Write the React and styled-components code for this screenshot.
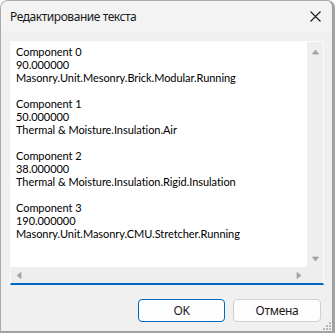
import React from 'react';
import styled, { createGlobalStyle } from 'styled-components';

const GlobalStyle = createGlobalStyle`
  html, body {
    margin: 0;
    padding: 0;
    background: #ffffff;
  }
  body {
    font-family: "Noto Sans", "Open Sans", sans-serif;
  }
`

const lines = [
  'Component 0',
  '90.000000',
  'Masonry.Unit.Mesonry.Brick.Modular.Running',
  '',
  'Component 1',
  '50.000000',
  'Thermal & Moisture.Insulation.Air',
  '',
  'Component 2',
  '38.000000',
  'Thermal & Moisture.Insulation.Rigid.Insulation',
  '',
  'Component 3',
  '190.000000',
  'Masonry.Unit.Masonry.CMU.Stretcher.Running',
];

const Arrow = ({ dir }) => {
  const shapes = {
    up: '0.5,5 3.5,1 6.5,5',
    down: '0.5,1 3.5,5 6.5,1',
    left: '5,0.5 1,3.5 5,6.5',
    right: '1,0.5 5,3.5 1,6.5',
  };
  return (
    <svg width="7" height="7" viewBox="0 0 7 7">
      <polygon points={shapes[dir]} fill="#a3a3a3" stroke="#a3a3a3" strokeWidth="0.8" strokeLinejoin="round" />
    </svg>
  );
};

const App = () => {
  return (
    <>
      <GlobalStyle />
      <Window>
        <TitleBar>
          <Title>Редактирование текста</Title>
          <CloseButton>
            <svg width="11" height="11" viewBox="0 0 11 11">
              <path d="M0.5 0.5 L10.5 10.5 M10.5 0.5 L0.5 10.5" stroke="#1a1a1a" strokeWidth="1.1" />
            </svg>
          </CloseButton>
        </TitleBar>
        <Body>
          <EditBox>
            <TextArea>
              {lines.map((line, i) => (
                <Line key={i}>{line || '\u00a0'}</Line>
              ))}
            </TextArea>
            <VScroll>
              <ArrowCell><Arrow dir="up" /></ArrowCell>
              <ArrowCell><Arrow dir="down" /></ArrowCell>
            </VScroll>
            <HScroll>
              <ArrowCell><Arrow dir="left" /></ArrowCell>
              <ArrowCell><Arrow dir="right" /></ArrowCell>
            </HScroll>
            <Corner />
          </EditBox>
          <ButtonRow>
            <Button primary>OK</Button>
            <Button>Отмена</Button>
          </ButtonRow>
        </Body>
        <Grip>
          <svg width="8" height="8" viewBox="0 0 8 8">
            <rect x="6" y="0" width="2" height="2" fill="#b8b8b8" />
            <rect x="3" y="3" width="2" height="2" fill="#b8b8b8" />
            <rect x="6" y="3" width="2" height="2" fill="#b8b8b8" />
            <rect x="0" y="6" width="2" height="2" fill="#b8b8b8" />
            <rect x="3" y="6" width="2" height="2" fill="#b8b8b8" />
            <rect x="6" y="6" width="2" height="2" fill="#b8b8b8" />
          </svg>
        </Grip>
      </Window>
    </>
  );
};

export default App;

const Window = styled.div`
  position: relative;
  box-sizing: border-box;
  width: 335px;
  height: 333px;
  display: flex;
  flex-direction: column;
  background: #f0f0f0;
  border: 1px solid #a9a9a9;
  border-right: 3px solid #a2a2a2;
  border-bottom: 2px solid #a2a2a2;
  border-radius: 8px 8px 0 0;
  overflow: hidden;
`

const TitleBar = styled.div`
  height: 30px;
  flex: none;
  display: flex;
  align-items: center;
  justify-content: space-between;
  padding: 0 0 0 9px;
  background: #f3f3f3;
`

const Title = styled.div`
  font-family: "Noto Sans", sans-serif;
  font-size: 12px;
  letter-spacing: -0.45px;
  color: #1a1a1a;
  padding-top: 1px;
`

const CloseButton = styled.div`
  width: 46px;
  height: 30px;
  display: flex;
  align-items: center;
  justify-content: center;
  margin-right: -6px;
`

const Body = styled.div`
  flex: 1;
  display: flex;
  flex-direction: column;
  padding: 10px 8px 0 9px;
`

const EditBox = styled.div`
  box-sizing: border-box;
  width: 314px;
  height: 244px;
  display: grid;
  grid-template-columns: 296px 16px;
  grid-template-rows: 225px 16px;
  border: 1px solid #fbfbfb;
  border-bottom: 2px solid #0067c0;
  background: #eeeeee;
`

const TextArea = styled.div`
  background: #ffffff;
  padding: 3px 5px 0;
  overflow: hidden;
  font-family: Lato, "Noto Sans", sans-serif;
  font-size: 11px;
  letter-spacing: -0.05px;
  color: #000000;
`

const Line = styled.div`
  height: 13px;
  line-height: 13px;
  white-space: pre;
`

const VScroll = styled.div`
  display: flex;
  flex-direction: column;
  justify-content: space-between;
  padding: 2px 0 0;
  background: #eeeeee;
`

const HScroll = styled.div`
  display: flex;
  justify-content: space-between;
  background: #eeeeee;
`

const ArrowCell = styled.div`
  width: 16px;
  height: 16px;
  display: flex;
  align-items: center;
  justify-content: center;
`

const Corner = styled.div`
  background: #eeeeee;
`

const ButtonRow = styled.div`
  display: flex;
  justify-content: flex-end;
  gap: 8px;
  margin-top: 14px;
  padding-right: 3px;
`

const Button = styled.div`
  box-sizing: border-box;
  width: ${props => props.primary ? '87px' : '88px'};
  height: 23px;
  display: flex;
  align-items: center;
  justify-content: center;
  background: #fdfdfd;
  border: 1px solid ${props => props.primary ? '#0067c0' : '#d0d0d0'};
  border-radius: 4px;
  font-family: "Noto Sans", sans-serif;
  font-size: 12px;
  letter-spacing: -0.3px;
  color: #1a1a1a;
`

const Grip = styled.div`
  position: absolute;
  right: 1px;
  bottom: 1px;
  width: 8px;
  height: 8px;
  display: flex;
`
